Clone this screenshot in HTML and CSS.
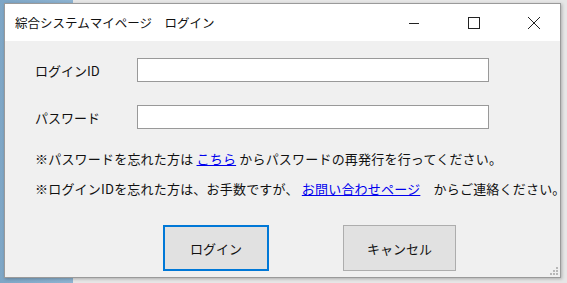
FILE: index.html
```html
<!DOCTYPE html>
<html lang="ja">
<head>
    <meta charset="UTF-8">
    <meta name="viewport" content="width=device-width, initial-scale=1.0">
    <title>ログイン</title>
    <link rel="stylesheet" href="styles.css">
</head>

<body>
    <div class="desktop">
        <div class="window">
            <div class="titlebar">
                <span class="title">綜合システムマイページ　ログイン</span>
                <div class="controls">
                    <span class="ctl">
                        <svg width="12" height="12" viewBox="0 0 12 12"><path d="M1 6.5h10" stroke="#222" stroke-width="1"/></svg>
                    </span>
                    <span class="ctl">
                        <svg width="12" height="12" viewBox="0 0 12 12"><rect x="0.5" y="0.5" width="11" height="11" fill="none" stroke="#222" stroke-width="1"/></svg>
                    </span>
                    <span class="ctl">
                        <svg width="14" height="14" viewBox="0 0 14 14"><path d="M1 1L13 13M13 1L1 13" stroke="#222" stroke-width="1"/></svg>
                    </span>
                </div>
            </div>

            <form class="client">
                <div class="row">
                    <label class="label" for="loginId">ログインID</label>
                    <input class="field" type="text" id="loginId">
                </div>
                <div class="row">
                    <label class="label" for="pass">パスワード</label>
                    <input class="field" type="password" id="pass">
                </div>

                <p class="note">※パスワードを忘れた方は <a href="#">こちら</a> からパスワードの再発行を行ってください。</p>
                <p class="note">※ログインIDを忘れた方は、お手数ですが、 <a href="#">お問い合わせページ</a>　からご連絡ください。</p>

                <div class="buttons">
                    <button class="btn default" type="button">ログイン</button>
                    <button class="btn" type="button">キャンセル</button>
                </div>

                <svg class="grip" width="10" height="10" viewBox="0 0 10 10">
                    <rect x="8" y="2" width="2" height="2" fill="#b8b8b8"/>
                    <rect x="5" y="5" width="2" height="2" fill="#b8b8b8"/>
                    <rect x="8" y="5" width="2" height="2" fill="#b8b8b8"/>
                    <rect x="2" y="8" width="2" height="2" fill="#b8b8b8"/>
                    <rect x="5" y="8" width="2" height="2" fill="#b8b8b8"/>
                    <rect x="8" y="8" width="2" height="2" fill="#b8b8b8"/>
                </svg>
            </form>
        </div>
    </div>
</body>

</html>
```

FILE: styles.css
```css
body {
    margin: 0;
    overflow: hidden;
    font-family: "Noto Sans CJK JP", "Noto Sans", sans-serif;
}

.desktop {
    width: 567px;
    height: 283px;
    background: linear-gradient(to right, #7ea6c6 0, #8db3d1 73px, #e6e6e6 73px);
    padding: 3px 0 0 4px;
    box-sizing: border-box;
}

.window {
    width: 557px;
    height: 275px;
    box-sizing: border-box;
    border: 1px solid #9a9a9a;
    background-color: #f0f0f0;
    display: flex;
    flex-direction: column;
    box-shadow: 1px 1px 3px rgba(0, 0, 0, 0.25);
}

.titlebar {
    height: 37px;
    background-color: #fff;
    display: flex;
    align-items: center;
    justify-content: space-between;
    padding-left: 10px;
}

.title {
    font-size: 12.5px;
    color: #111;
}

.controls {
    display: flex;
    height: 100%;
    margin-right: -4px;
}

.ctl {
    width: 60px;
    display: flex;
    align-items: center;
    justify-content: center;
}

.client {
    flex: 1;
    position: relative;
    margin: 0;
    padding: 17px 0 0 30px;
    font-size: 13px;
    color: #111;
}

.row {
    display: flex;
    align-items: center;
    height: 24px;
    margin-bottom: 23px;
}

.label {
    width: 102px;
}

.field {
    width: 352px;
    height: 24px;
    box-sizing: border-box;
    border: 1px solid #999;
    background-color: #fff;
    margin: 0;
}

.note {
    margin: 0;
    line-height: 30px;
    white-space: nowrap;
    letter-spacing: 0.2px;
}

.note:first-of-type {
    margin-top: -8px;
}

.note a {
    color: #0000ee;
}

.buttons {
    display: flex;
    gap: 74px;
    padding-left: 128px;
    margin-top: 21px;
}

.btn {
    width: 106px;
    height: 46px;
    font-family: inherit;
    font-size: 13px;
    background-color: #e1e1e1;
    border: 1px solid #adadad;
    color: #111;
}

.btn + .btn {
    width: 113px;
}

.btn.default {
    border: 2px solid #0078d7;
}

.grip {
    position: absolute;
    right: 2px;
    bottom: 2px;
}
```
